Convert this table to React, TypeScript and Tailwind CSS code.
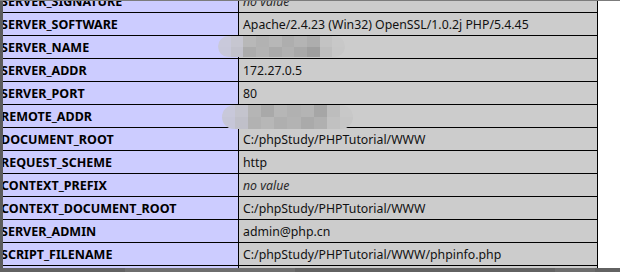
import React from "react";

type Row = { k: string; v?: string; nv?: boolean; blur?: boolean };

const rows: Row[] = [
  { k: "SERVER_SIGNATURE", nv: true },
  { k: "SERVER_SOFTWARE", v: "Apache/2.4.23 (Win32) OpenSSL/1.0.2j PHP/5.4.45" },
  { k: "SERVER_NAME", blur: true },
  { k: "SERVER_ADDR", v: "172.27.0.5" },
  { k: "SERVER_PORT", v: "80" },
  { k: "REMOTE_ADDR", blur: true },
  { k: "DOCUMENT_ROOT", v: "C:/phpStudy/PHPTutorial/WWW" },
  { k: "REQUEST_SCHEME", v: "http" },
  { k: "CONTEXT_PREFIX", nv: true },
  { k: "CONTEXT_DOCUMENT_ROOT", v: "C:/phpStudy/PHPTutorial/WWW" },
  { k: "SERVER_ADMIN", v: "admin@php.cn" },
  { k: "SCRIPT_FILENAME", v: "C:/phpStudy/PHPTutorial/WWW/phpinfo.php" },
  { k: "SCRIPT_NAME", v: "/phpinfo.php" },
];

const Mosaic = ({ cls, top, bottom }: { cls: string; top: string[]; bottom: string[] }) => (
  <div className={`absolute flex flex-col overflow-hidden rounded-full ${cls}`}>
    {[top, bottom].map((line, j) => (
      <div key={j} className="flex flex-1">
        {line.map((c, i) => (
          <div key={i} className="flex-1" style={{ background: c }} />
        ))}
      </div>
    ))}
  </div>
);

export default function App() {
  return (
    <div
      className="flex h-[272px] w-[620px] flex-col overflow-hidden bg-white"
      style={{ fontFamily: '"Noto Sans", "Open Sans", sans-serif' }}
    >
      <div className="h-px bg-[#7c7c7c]" />
      <div className="flex min-h-0 flex-1">
        <div className="w-[3px] bg-[#5c5c5c]" />
        <div className="relative flex-1 overflow-hidden">
          <div className="-ml-[7px] -mt-[11px] flex w-[602px] flex-col">
            {rows.map((r) => (
              <div key={r.k} className="flex h-[23px] border-b border-black">
                <div className="w-[243px] border-r border-black bg-[#ccccff] pl-[5px] pt-px text-[12.5px] font-bold leading-[21px] text-black">
                  {r.k}
                </div>
                <div className="w-[359px] border-r border-black bg-[#cccccc] pl-[4px] pt-px text-[12.3px] leading-[21px] text-[#111]">
                  {r.nv ? <i className="text-[#2a2a2a]">no value</i> : r.v}
                </div>
              </div>
            ))}
          </div>
          <Mosaic
            cls="left-[215px] top-[35px] h-[21px] w-[127px] blur-[0.6px]"
            top={["#c9c9db", "#c6c6d0", "#b8b8b8", "#b2b2b2", "#b7b7b7", "#aeaeae", "#b4b4b4", "#adadad", "#c3c3c3", "#c8c8c8"]}
            bottom={["#c8c8da", "#c2c2cc", "#acacac", "#b3b3b3", "#aaaaaa", "#b1b1b1", "#a9a9a9", "#9f9f9f", "#bebebe", "#c7c7c7"]}
          />
          <Mosaic
            cls="left-[219px] top-[104px] h-[24px] w-[131px] blur-[0.6px]"
            top={["#c8c8da", "#c4c4cd", "#b5b5b5", "#a9a9a9", "#b6b6b6", "#b1b1b1", "#b4b4b4", "#a6a6a6", "#bdbdbd", "#c8c8c8"]}
            bottom={["#c6c6d8", "#c0c0c9", "#b2b2b2", "#b7b7b7", "#afafaf", "#b3b3b3", "#aaaaaa", "#b0b0b0", "#c1c1c1", "#c6c6c6"]}
          />
        </div>
      </div>
      <div className="flex h-[4px] bg-[#626262]">
        <div className="ml-[125px] w-[170px] bg-[#6e6e6e]" />
        <div className="ml-[260px] w-[40px] bg-[#6c6c6c]" />
      </div>
    </div>
  );
}
